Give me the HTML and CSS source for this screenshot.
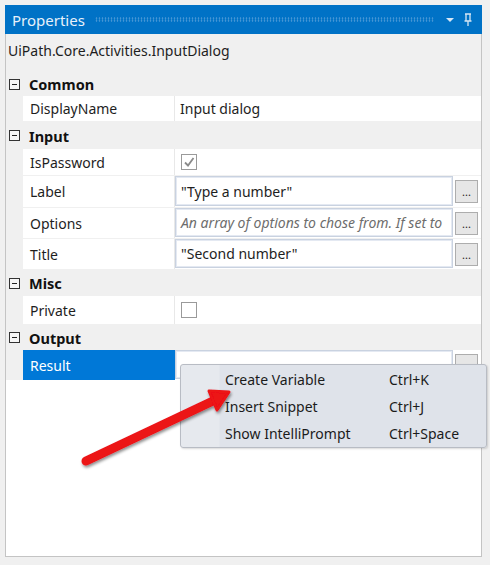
FILE: index.html
```html
<!DOCTYPE html>
<html>
<head>
<meta charset="utf-8">
<link rel="stylesheet" href="styles.css">
</head>
<body>
<div class="panel">
  <div class="titlebar">
    <span class="title">Properties</span>
    <span class="grip"></span>
    <svg class="tb-icon" width="12" height="8" viewBox="0 0 12 8"><path d="M2 2 H10 L6 6 Z" fill="#d6e6f5"/></svg>
    <svg class="tb-icon" width="12" height="14" viewBox="0 0 12 14"><path d="M3 1 H9 M4 1 V8 M8 1 V8 M2.5 8 H9.5 M6 8 V13" stroke="#d6e6f5" stroke-width="1.3" fill="none"/></svg>
  </div>
  <div class="typename">UiPath.Core.Activities.InputDialog</div>
  <div class="grid">
    <div class="cat cat-common"><span class="toggle"></span><span>Common</span></div>
    <div class="prop h26"><div class="name">DisplayName</div><div class="val plain">Input dialog</div></div>

    <div class="cat cat-input"><span class="toggle"></span><span>Input</span></div>
    <div class="prop h27"><div class="name">IsPassword</div><div class="val"><span class="check on"><svg width="14" height="14" viewBox="0 0 14 14"><path d="M3 7.5 L6 10.5 L11.5 3" stroke="#8a8a8a" stroke-width="1.8" fill="none"/></svg></span></div></div>
    <div class="prop h32"><div class="name">Label</div><div class="val"><span class="box">"Type a number"</span><span class="dots">...</span></div></div>
    <div class="prop h31"><div class="name">Options</div><div class="val"><span class="box hint">An array of options to chose from. If set to</span><span class="dots">...</span></div></div>
    <div class="prop h31"><div class="name">Title</div><div class="val"><span class="box">"Second number"</span><span class="dots">...</span></div></div>

    <div class="cat cat-misc"><span class="toggle"></span><span>Misc</span></div>
    <div class="prop h29"><div class="name">Private</div><div class="val"><span class="check"></span></div></div>

    <div class="cat cat-output"><span class="toggle"></span><span>Output</span></div>
    <div class="prop h30 selected"><div class="name">Result</div><div class="val"><span class="box"></span><span class="dots">...</span></div></div>
    <div class="fill"></div>
  </div>
</div>

<div class="menu">
  <div class="item"><span class="label">Create Variable</span><span class="key">Ctrl+K</span></div>
  <div class="item"><span class="label">Insert Snippet</span><span class="key">Ctrl+J</span></div>
  <div class="item"><span class="label">Show IntelliPrompt</span><span class="key">Ctrl+Space</span></div>
</div>

<svg class="arrow" width="170" height="100" viewBox="0 0 170 100">
  <defs>
    <filter id="sh" x="-20%" y="-30%" width="140%" height="160%">
      <feDropShadow dx="1" dy="2" stdDeviation="1.5" flood-color="#000" flood-opacity="0.45"/>
    </filter>
  </defs>
  <g filter="url(#sh)">
    <line x1="8" y1="83" x2="137" y2="22" stroke="#ec1218" stroke-width="9" stroke-linecap="round"/>
    <path d="M151 14 L131 13 L139 32 Z" fill="#ec1218" stroke="#ec1218" stroke-width="3" stroke-linejoin="round"/>
  </g>
</svg>
</body>
</html>
```

FILE: styles.css
```css
html, body {
  margin: 0;
  padding: 0;
}
body {
  background: #f0f0f0;
  width: 490px;
  height: 565px;
  overflow: hidden;
  position: relative;
  font-family: "Noto Sans", "Open Sans", sans-serif;
  font-size: 14px;
  color: #1e1e1e;
}
.panel {
  margin: 5px 0 0 5px;
  width: 477px;
  height: 552px;
  box-sizing: border-box;
  border: 1px solid #c4c4c4;
  border-top: none;
  background: #ffffff;
  display: flex;
  flex-direction: column;
}
.titlebar {
  height: 29px;
  margin: 0 -1px;
  background: #0072c6;
  display: flex;
  align-items: center;
  padding: 0 8px 0 7px;
  gap: 6px;
  flex-shrink: 0;
}
.title {
  color: #e8f1fa;
  font-size: 15px;
  margin-right: 4px;
}
.grip {
  flex: 1;
  height: 5px;
  margin-right: 4px;
  background-image: radial-gradient(circle, #4d9ad6 0.7px, transparent 1.1px);
  background-size: 3px 2.5px;
}
.tb-icon {
  display: block;
}
.typename {
  background: #f0f0f0;
  height: 38px;
  line-height: 33px;
  padding-left: 2px;
  font-size: 14px;
  flex-shrink: 0;
}
.grid {
  flex: 1;
  display: flex;
  flex-direction: column;
  background: #f0f0f0;
}
.cat {
  display: flex;
  align-items: center;
  font-weight: bold;
  font-size: 14.5px;
  color: #111;
  padding-left: 3px;
  gap: 9px;
}
.cat-common { height: 24px; }
.cat-input { height: 27px; }
.cat-misc { height: 26px; }
.cat-output { height: 25px; }
.toggle {
  width: 9px;
  height: 9px;
  border: 1px solid #333;
  position: relative;
  background: #f7f7f7;
}
.toggle::after {
  content: "";
  position: absolute;
  left: 2px;
  right: 2px;
  top: 4px;
  height: 1px;
  background: #222;
}
.prop {
  display: flex;
  margin-left: 17px;
  border-bottom: 1px solid #f0f0f0;
  box-sizing: border-box;
}
.h26 { height: 26px; }
.h27 { height: 27px; }
.h29 { height: 29px; }
.h30 { height: 30px; border-bottom: none; }
.h31 { height: 31px; }
.h32 { height: 32px; }
.name {
  width: 152px;
  flex-shrink: 0;
  background: #fff;
  border-right: 1px solid #e8e8e8;
  display: flex;
  align-items: center;
  padding-left: 7px;
  box-sizing: border-box;
  font-size: 14px;
}
.selected .name {
  background: #0078d7;
  color: #fff;
  border-right-color: #0078d7;
}
.val {
  flex: 1;
  background: #fff;
  display: flex;
  align-items: center;
  padding-right: 3px;
  font-size: 14px;
}
.val.plain {
  padding-left: 5px;
}
.box {
  flex: 1;
  align-self: stretch;
  border: 1px solid #c9d2e0;
  box-shadow: inset 0 0 0 1px #e4e9f2;
  background: #fff;
  display: flex;
  align-items: center;
  padding-left: 5px;
  white-space: nowrap;
  overflow: hidden;
  min-width: 0;
  margin-bottom: 1px;
}
.hint {
  font-style: italic;
  color: #6d6d6d;
}
.dots {
  width: 23px;
  height: 23px;
  margin-left: 2px;
  border: 1px solid #adadad;
  background: #e6e6e6;
  font-size: 11px;
  display: flex;
  align-items: flex-end;
  justify-content: center;
  line-height: 14px;
  box-sizing: border-box;
  padding-bottom: 3px;
}
.check {
  width: 16px;
  height: 16px;
  box-sizing: border-box;
  border: 1px solid #9a9a9a;
  margin-left: 6px;
  background: #fff;
  display: flex;
  align-items: center;
  justify-content: center;
}
.fill {
  flex: 1;
  background: #fff;
}
.menu {
  position: absolute;
  left: 180px;
  top: 364px;
  width: 307px;
  height: 84px;
  box-sizing: border-box;
  border: 1px solid #b8bcc4;
  border-radius: 3px;
  background: linear-gradient(to right, #e6e9ee 0, #e6e9ee 38px, #dfe3ea 39px, #dfe3ea 100%);
  box-shadow: 1px 1px 2px rgba(0,0,0,0.15);
  padding-top: 1px;
  font-size: 14px;
  color: #1b1b1b;
}
.item {
  height: 27px;
  display: flex;
  align-items: center;
  padding-left: 44px;
}
.item .label {
  width: 164px;
}
.arrow {
  position: absolute;
  left: 78px;
  top: 378px;
}
```
